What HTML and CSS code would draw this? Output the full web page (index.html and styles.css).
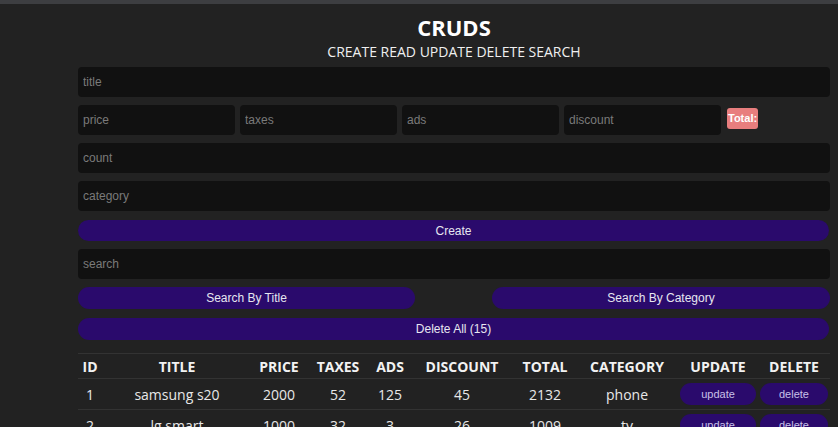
FILE: index.html
```html
<!DOCTYPE html>
<html>
<head>
<meta charset="utf-8">
<link rel="stylesheet" href="styles.css">
</head>
<body>
<div class="topbar"></div>
<div class="crud">
  <div class="head">
    <h2>CRUDS</h2>
    <p>CREATE READ UPDATE DELETE SEARCH</p>
  </div>
  <div class="inputs">
    <input type="text" class="field" placeholder="title">
    <div class="price">
      <input type="text" class="field small" placeholder="price">
      <input type="text" class="field small" placeholder="taxes">
      <input type="text" class="field small" placeholder="ads">
      <input type="text" class="field small" placeholder="discount">
      <small class="total">Total:</small>
    </div>
    <input type="text" class="field" placeholder="count">
    <input type="text" class="field" placeholder="category">
    <button class="btn create">Create</button>
  </div>
  <div class="search-block">
    <input type="text" class="field" placeholder="search">
    <div class="btn-search">
      <button class="btn half">Search By Title</button>
      <button class="btn half">Search By Category</button>
    </div>
  </div>
  <div class="delete-all">
    <button class="btn">Delete All (15)</button>
  </div>
  <table class="outputs">
    <colgroup>
      <col class="c-id"><col class="c-title"><col class="c-price"><col class="c-taxes"><col class="c-ads">
      <col class="c-disc"><col class="c-total"><col class="c-cat"><col class="c-upd"><col class="c-del">
    </colgroup>
    <thead>
      <tr>
        <th>ID</th><th>TITLE</th><th>PRICE</th><th>TAXES</th><th>ADS</th>
        <th>DISCOUNT</th><th>TOTAL</th><th>CATEGORY</th><th>UPDATE</th><th>DELETE</th>
      </tr>
    </thead>
    <tbody>
      <tr>
        <td>1</td><td>samsung s20</td><td>2000</td><td>52</td><td>125</td>
        <td>45</td><td>2132</td><td>phone</td>
        <td><button class="btn row-btn">update</button></td>
        <td><button class="btn row-btn">delete</button></td>
      </tr>
      <tr>
        <td>2</td><td>lg smart</td><td>1000</td><td>32</td><td>3</td>
        <td>26</td><td>1009</td><td>tv</td>
        <td><button class="btn row-btn">update</button></td>
        <td><button class="btn row-btn">delete</button></td>
      </tr>
    </tbody>
  </table>
</div>
</body>
</html>
```
FILE: styles.css
```css
* { box-sizing: border-box; }
html, body { margin: 0; padding: 0; }
body {
  background: #222222;
  color: #fff;
  font-family: "Open Sans", "Noto Sans", sans-serif;
  height: 427px;
  overflow: hidden;
}
.topbar {
  height: 4px;
  background: #3d3e41;
}
.crud {
  width: 752px;
  margin-left: 78px;
}
.head {
  text-align: center;
}
.head h2 {
  margin: 0;
  padding-top: 9px;
  font-size: 22px;
  line-height: 28px;
  font-weight: 700;
}
.head p {
  margin: 0;
  font-size: 14px;
  line-height: 22px;
  color: #f0f0f0;
}
.field {
  display: block;
  width: 100%;
  height: 30px;
  border: none;
  outline: none;
  background: #111111;
  border-radius: 4px;
  padding: 0 5px;
  margin: 0 0 8px;
  color: #ddd;
  font-family: "Liberation Sans", Arial, sans-serif;
  font-size: 12px;
}
.field::placeholder { color: #7a7a7a; }
.inputs { padding-top: 4px; }
.price {
  display: flex;
  align-items: center;
  gap: 5px;
}
.field.small {
  width: 157px;
  flex: none;
}
.total {
  margin-left: 1px;
  margin-top: -11px;
  background: #e87e7e;
  color: #fff;
  font-family: "Liberation Sans", Arial, sans-serif;
  font-weight: 700;
  font-size: 11px;
  line-height: 21px;
  padding: 0 1px;
  border-radius: 3px;
}
.btn {
  display: block;
  width: 100%;
  height: 22px;
  border: none;
  border-radius: 11px;
  background: #2a0a6c;
  color: #e6e6f0;
  font-family: "Liberation Sans", Arial, sans-serif;
  font-size: 12px;
  padding: 0;
  cursor: pointer;
}
.create { margin: 9px 0 8px; width: 751px; height: 21px; }
.search-block .field { margin-bottom: 8px; }
.btn-search {
  display: flex;
  justify-content: space-between;
}
.btn.half { width: 337px; }
.btn-search .half:last-child { width: 338px; }
.delete-all { margin-top: 9px; }
.delete-all .btn { width: 751px; }
.outputs {
  margin-top: 13px;
  width: 752px;
  table-layout: fixed;
  border-collapse: collapse;
  text-align: center;
  font-size: 14px;
}
.c-id { width: 24px; }
.c-title { width: 150px; }
.c-price { width: 54px; }
.c-taxes { width: 64px; }
.c-ads { width: 40px; }
.c-disc { width: 104px; }
.c-total { width: 62px; }
.c-cat { width: 102px; }
.c-upd { width: 80px; }
.c-del { width: 72px; }
.outputs th {
  font-weight: 700;
  height: 25px;
  padding: 0;
  border-top: 1px solid #333;
  border-bottom: 1px solid #333;
  color: #f2f2f2;
}
.outputs td {
  height: 31px;
  padding: 0 2px;
  border-bottom: 1px solid #333;
  color: #e8e8e8;
}
.row-btn {
  height: 22px;
  font-size: 11px;
  color: #c8c0e8;
}
```
